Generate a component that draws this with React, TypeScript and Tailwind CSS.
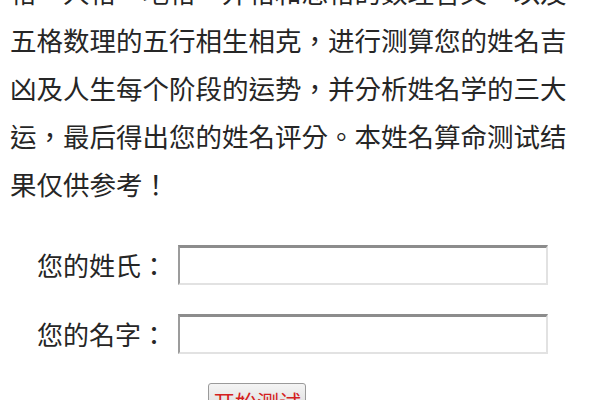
import React from 'react';

const cjk = { fontFamily: '"Noto Sans CJK TC", "Noto Sans CJK SC", "Noto Sans", sans-serif' };

function Field({ label }: { label: string }) {
  return (
    <div className="flex items-center pl-[37px]">
      <span className="text-[26px] leading-[40px] text-[#262626]">{label}</span>
      <input
        type="text"
        className="ml-[11px] h-[40px] w-[370px] border-2 border-t-[3px] border-t-[#8c8c8c] border-l-[#9c9c9c] border-r-[#e2e2e2] border-b-[#e2e2e2] bg-white outline-none"
      />
    </div>
  );
}

export default function App() {
  return (
    <div className="h-[400px] w-[600px] overflow-hidden bg-white" style={cjk}>
      {/* intro text, scrolled so the first line is cut off */}
      <p className="mt-[-32px] px-[10px] text-[26.5px] leading-[48px] text-[#262626]">
        格、人格、地格、外格和总格的数理含义，以及五格数理的五行相生相克，进行测算您的姓名吉凶及人生每个阶段的运势，并分析姓名学的三大运，最后得出您的姓名评分。本姓名算命测试结果仅供参考！
      </p>

      <form className="mt-[37px] flex flex-col gap-[29px]">
        <Field label="您的姓氏：" />
        <Field label="您的名字：" />
        <div className="pl-[208px]">
          <button
            type="button"
            className="h-[36px] w-[98px] rounded-[3px] border border-[#9a9a9a] bg-gradient-to-b from-[#f4f4f4] to-[#d6d6d6] text-[22px] leading-[30px] text-[#d42020]"
          >
            开始测试
          </button>
        </div>
      </form>
    </div>
  );
}
